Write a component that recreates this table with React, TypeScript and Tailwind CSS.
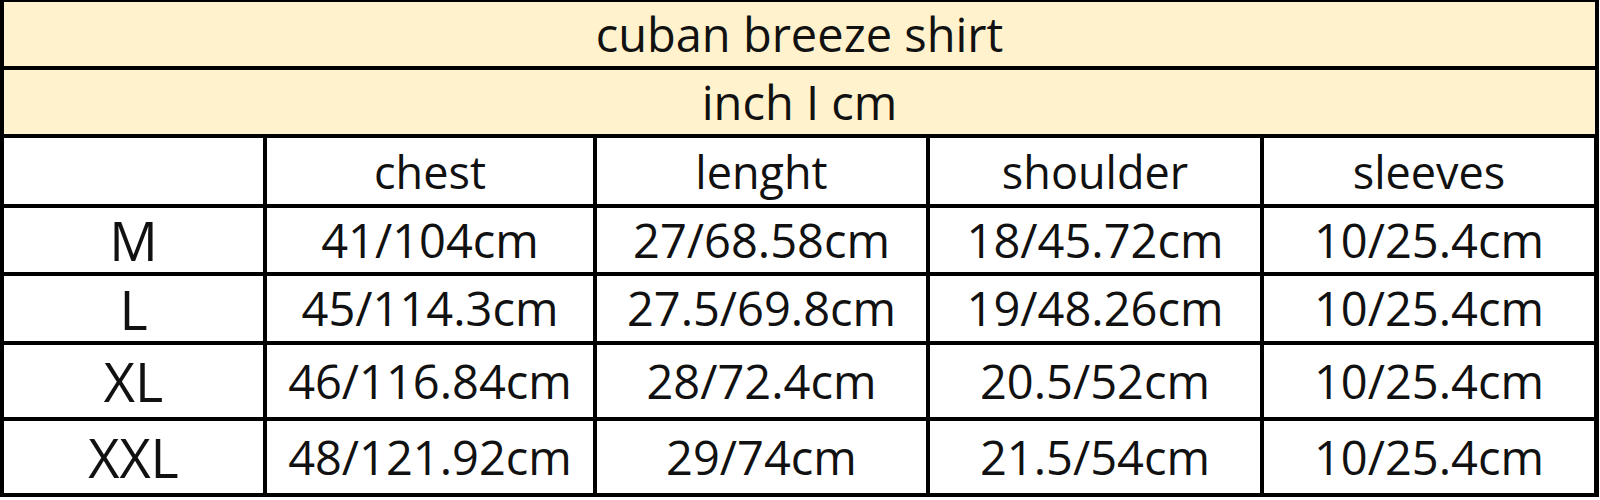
const headers = ["chest", "lenght", "shoulder", "sleeves"];

const rows = [
  { size: "M", values: ["41/104cm", "27/68.58cm", "18/45.72cm", "10/25.4cm"], h: "h-[64px]" },
  { size: "L", values: ["45/114.3cm", "27.5/69.8cm", "19/48.26cm", "10/25.4cm"], h: "h-[65px]" },
  { size: "XL", values: ["46/116.84cm", "28/72.4cm", "20.5/52cm", "10/25.4cm"], h: "h-[72px]" },
  { size: "XXL", values: ["48/121.92cm", "29/74cm", "21.5/54cm", "10/25.4cm"], h: "h-[72px]" },
];

export default function App() {
  return (
    <div
      className="w-[1600px] h-[500px] bg-white text-[#111]"
      style={{ fontFamily: '"Open Sans", "Noto Sans", sans-serif' }}
    >
      <div className="w-[1599px] bg-black pt-[2px] px-[4px] pb-[4px] flex flex-col gap-[4px]">
        <div className="h-[64px] bg-[#fff2cc] flex items-center justify-center text-[47px] leading-none">
          cuban breeze shirt
        </div>
        <div className="h-[64px] bg-[#fff2cc] flex items-center justify-center text-[47px] leading-none">
          inch I cm
        </div>
        <div className="grid grid-cols-[259px_326px_329px_330px_330px] gap-[4px]">
          <div className="h-[66px] bg-white" />
          {headers.map((h) => (
            <div key={h} className="h-[66px] bg-white flex items-center justify-center text-[45px] leading-none">
              {h}
            </div>
          ))}
          {rows.map((r) => (
            <>
              <div key={r.size} className={`${r.h} bg-white flex items-center justify-center text-[54px] leading-none`}>
                {r.size}
              </div>
              {r.values.map((v, i) => (
                <div key={r.size + i} className={`${r.h} bg-white flex items-center justify-center text-[47px] leading-none`}>
                  {v}
                </div>
              ))}
            </>
          ))}
        </div>
      </div>
    </div>
  );
}
